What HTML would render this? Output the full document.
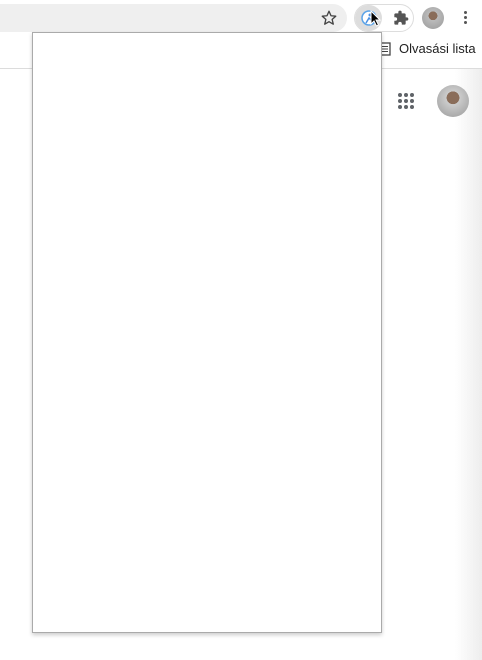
<!DOCTYPE html>
<html><head><meta charset="utf-8"><style>
body{margin:0;width:482px;height:660px;overflow:hidden;background:#fff;position:relative;font-family:"Liberation Sans",sans-serif}
.a{position:absolute}
</style></head><body>
<div class="a" style="left:455px;top:69px;width:27px;height:591px;background:linear-gradient(to right,#fff,#ededed)"></div>
<div class="a" style="left:0;top:4px;width:347px;height:28px;background:#efefef;border-radius:0 14px 14px 0"></div>
<div class="a" style="left:0;top:68px;width:482px;height:1px;background:#dcdcdc"></div>
<svg class="a" style="left:320px;top:9px" width="18" height="18" viewBox="0 0 24 24"><path d="M12 3l2.7 6 6.3.6-4.8 4.2 1.5 6.4L12 16.9 6.3 20.2l1.5-6.4L3 9.6l6.3-.6z" fill="none" stroke="#444" stroke-width="1.8" stroke-linejoin="round"/></svg>
<div class="a" style="left:354px;top:4px;width:60px;height:28px;border:1px solid #ddd;border-radius:15px;box-sizing:border-box"></div>
<div class="a" style="left:355px;top:5px;width:27px;height:26px;background:#ddd;border-radius:13px"></div>
<svg class="a" style="left:360px;top:9px" width="18" height="18" viewBox="0 0 18 18"><circle cx="9" cy="9" r="7" fill="#fff" stroke="#5aa3e8" stroke-width="1.5"/><circle cx="10" cy="6" r="1.5" fill="#4a90e2"/><path d="M6 14l3-5 3 3" stroke="#4a90e2" stroke-width="1.5" fill="none"/></svg>
<svg class="a" style="left:370px;top:10px" width="12" height="18" viewBox="0 0 12 18"><path d="M1 1v13l3-3 2.5 5 2-1-2.5-5h4z" fill="#000" stroke="#fff" stroke-width="1"/></svg>
<svg class="a" style="left:393px;top:10px" width="16" height="16" viewBox="0 0 24 24"><path d="M20.5 11H19V7a2 2 0 0 0-2-2h-4V3.5a2.5 2.5 0 0 0-5 0V5H4a2 2 0 0 0-2 2v3.8h1.5a2.7 2.7 0 0 1 0 5.4H2V20a2 2 0 0 0 2 2h3.8v-1.5a2.7 2.7 0 0 1 5.4 0V22H17a2 2 0 0 0 2-2v-4h1.5a2.5 2.5 0 0 0 0-5z" fill="#555"/></svg>
<div class="a" style="left:422px;top:7px;width:22px;height:22px;border-radius:50%;background:radial-gradient(circle at 50% 40%,#8a6d5a 0 25%,#bbb 26%,#999 100%)"></div>
<div class="a" style="left:464px;top:11px;width:3px;height:3px;border-radius:50%;background:#555;box-shadow:0 5px #555,0 10px #555"></div>
<svg class="a" style="left:379px;top:42px" width="12" height="14" viewBox="0 0 12 14"><rect x="1" y="1" width="10" height="12" fill="none" stroke="#444" stroke-width="1.3"/><path d="M3 4.5h6M3 7h6M3 9.5h6" stroke="#444"/></svg>
<div class="a" style="left:399px;top:41px;font-size:13px;color:#222">Olvasási lista</div>
<div class="a" style="left:398px;top:93px;width:4px;height:4px;border-radius:50%;background:#5f6368;box-shadow:6px 0 #5f6368,12px 0 #5f6368,0 6px #5f6368,6px 6px #5f6368,12px 6px #5f6368,0 12px #5f6368,6px 12px #5f6368,12px 12px #5f6368"></div>
<div class="a" style="left:437px;top:85px;width:32px;height:32px;border-radius:50%;background:radial-gradient(circle at 50% 40%,#8a6d5a 0 25%,#ccc 26%,#999 100%)"></div>
<div class="a" style="left:32px;top:32px;width:350px;height:601px;background:#fff;border:1px solid #aaa;box-sizing:border-box;box-shadow:0 2px 4px rgba(0,0,0,.2)"></div>
</body></html>
